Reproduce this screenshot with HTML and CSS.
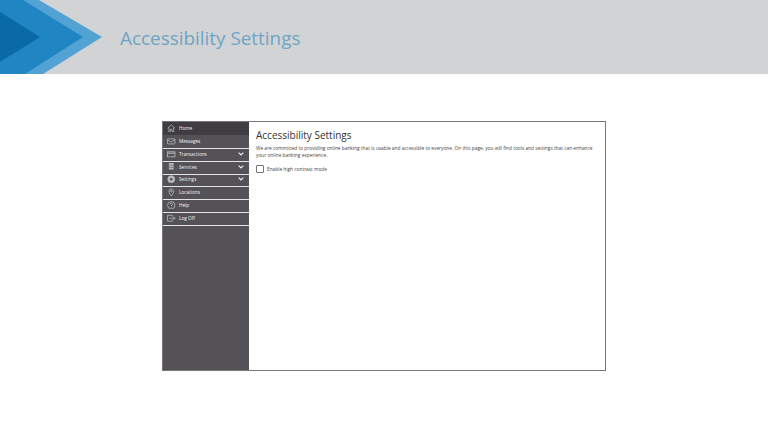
FILE: index.html
```html
<!DOCTYPE html>
<html lang="en">
  <head>
    <meta charset="UTF-8" />
    <title>Accessibility Settings</title>
    <link rel="stylesheet" href="styles.css">
  </head>
  <body>
    <header class="banner">
      <svg class="chevrons" width="102" height="74" viewBox="0 0 102 74">
        <polygon points="0,0 39,0 102,37 43,74 0,74" fill="#52a3d4"/>
        <polygon points="0,0 23,0 83,37 25,74 0,74" fill="#1f86c3"/>
        <polygon points="0,12 40,37 0,62" fill="#0a6aa5"/>
      </svg>
      <h1>Accessibility Settings</h1>
    </header>

    <main class="frame">
      <nav class="sidebar">
        <a class="nav-item dark">
          <svg class="icon" viewBox="0 0 16 16"><path d="M1 8 8 1.500 15 8M3.500 6.500V14.500H6.500V10H9.500V14.500H12.500V6.500"/></svg>
          <span>Home</span>
        </a>
        <a class="nav-item">
          <svg class="icon" viewBox="0 0 16 16"><rect x="1" y="3.500" width="14" height="9.500" rx="1"/><path d="M1 5 8 9.500 15 5"/></svg>
          <span>Messages</span>
        </a>
        <a class="nav-item ruled">
          <svg class="icon" viewBox="0 0 16 16"><rect x="1" y="3.500" width="14" height="9.500"/><rect class="fill" x="1" y="5" width="14" height="2"/></svg>
          <span>Transactions</span>
          <svg class="caret" viewBox="0 0 10 7"><path d="M1 1.200 5 5.200 9 1.200"/></svg>
        </a>
        <a class="nav-item ruled">
          <svg class="icon" viewBox="0 0 16 16"><rect class="fill" x="3.500" y="2" width="9" height="12" rx="1"/><path class="cut" d="M3.500 6H12.500M3.500 10H12.500"/></svg>
          <span>Services</span>
          <svg class="caret" viewBox="0 0 10 7"><path d="M1 1.200 5 5.200 9 1.200"/></svg>
        </a>
        <a class="nav-item ruled">
          <svg class="icon" viewBox="0 0 16 16"><circle class="fill" cx="8" cy="8" r="7"/><circle class="cut-fill" cx="8" cy="8" r="2.500"/></svg>
          <span>Settings</span>
          <svg class="caret" viewBox="0 0 10 7"><path d="M1 1.200 5 5.200 9 1.200"/></svg>
        </a>
        <a class="nav-item ruled">
          <svg class="icon" viewBox="0 0 16 16"><path d="M8 15C5 11 3.500 8.800 3.500 6.200A4.500 4.500 0 0 1 12.500 6.200C12.500 8.800 11 11 8 15Z"/><circle cx="8" cy="6.200" r="1.500"/></svg>
          <span>Locations</span>
        </a>
        <a class="nav-item ruled">
          <svg class="icon" viewBox="0 0 16 16"><circle cx="8" cy="8" r="7"/><path d="M5.800 6.200A2.200 2.200 0 1 1 8 8.500V10M8 11.200V12.500"/></svg>
          <span>Help</span>
        </a>
        <a class="nav-item ruled last">
          <svg class="icon" viewBox="0 0 16 16"><path d="M10 5V2.500H1V13.500H10V11M5 8H15M12 5 15 8 12 11"/></svg>
          <span>Log Off</span>
        </a>
      </nav>

      <section class="content">
        <h2>Accessibility Settings</h2>
        <p>We are committed to providing online banking that is usable and accessible to everyone. On this page, you will find tools and settings that can enhance your online banking experience.</p>
        <label class="option">
          <span class="checkbox"></span>
          <span>Enable high contrast mode</span>
        </label>
      </section>
    </main>
  </body>
</html>
```

FILE: styles.css
```css
body {
  margin: 0;
  height: 432px;
  overflow: hidden;
  background: #fff;
  font-family: "Open Sans", "Noto Sans", sans-serif;
  color: #333;
}

.banner {
  display: flex;
  align-items: center;
  gap: 18px;
  height: 74px;
  background: #d2d3d5;
}

.chevrons {
  flex: none;
}

.banner h1 {
  margin: 2px 0 0;
  font-size: 18.900px;
  font-weight: 400;
  color: #6ea5c6;
}

.frame {
  display: flex;
  width: 444px;
  height: 250px;
  margin: 47px 0 0 162px;
  box-sizing: border-box;
  border: 1px solid #77777a;
}

.sidebar {
  flex: none;
  width: 86px;
  background: #545157;
}

.nav-item {
  display: flex;
  align-items: center;
  box-sizing: border-box;
  height: 13px;
  padding: 0 4px 1px;
  font-size: 4.700px;
  color: #f2f2f2;
}

.nav-item.dark {
  background: #3f3d42;
}

.nav-item.ruled {
  height: 12.800px;
  padding-bottom: 2px;
  border-top: 1px solid #e4e4e6;
}

.nav-item.last {
  height: 13.800px;
  border-bottom: 1px solid #e4e4e6;
}

.nav-item span {
  flex: 1;
  margin-left: 3.500px;
}

.icon {
  flex: none;
  width: 8.500px;
  height: 8.500px;
  fill: none;
  stroke: #e8e8e8;
  stroke-width: 1;
}

.icon .fill {
  fill: #b9b9bc;
  stroke: none;
}

.icon .cut {
  stroke: #545157;
}

.icon .cut-fill {
  fill: #545157;
  stroke: none;
}

.caret {
  flex: none;
  width: 6px;
  height: 4px;
  margin-right: 1px;
  fill: none;
  stroke: #f2f2f2;
  stroke-width: 2;
}

.content {
  flex: 1;
  padding: 6px 7px;
  min-width: 0;
}

.content h2 {
  margin: 0 0 2px;
  font-size: 10px;
  line-height: 15px;
  font-weight: 400;
  color: #333;
}

.content p {
  margin: 0 0 6px;
  font-size: 4.800px;
  line-height: 7px;
  color: #444;
}

.option {
  display: flex;
  align-items: center;
  gap: 3px;
  font-size: 4.800px;
  color: #444;
}

.checkbox {
  width: 6px;
  height: 6px;
  border: 1px solid #77777a;
  border-radius: 1px;
}
```
